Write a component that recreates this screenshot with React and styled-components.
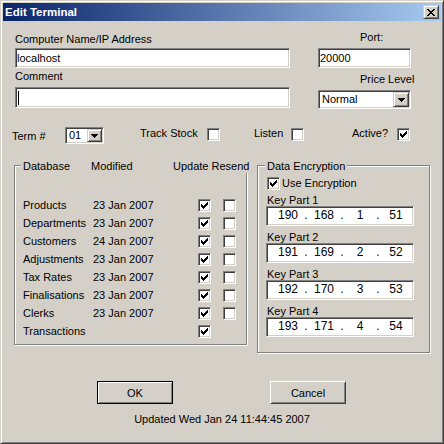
import React from 'react';
import styled, { createGlobalStyle } from 'styled-components';

const Global = createGlobalStyle`
  html, body { margin: 0; padding: 0; background: #D4D0C8; }
  body { font-family: "Liberation Sans", Arial, sans-serif; font-size: 11px; }
  * { box-sizing: border-box; }
`;

const FACE = '#D4D0C8';

const Window = styled.div`
  width: 444px;
  height: 444px;
  background: ${FACE};
  border: 1px solid;
  border-color: ${FACE} #404040 #404040 ${FACE};
  box-shadow: inset 1px 1px 0 #fff, inset -1px -1px 0 #808080;
  padding: 2px;
  display: flex;
  flex-direction: column;
  color: #000;
  font-family: "Liberation Sans", Arial, sans-serif;
  font-size: 11px;
  line-height: 13px;
`;

const TitleBar = styled.div`
  flex: none;
  height: 18px;
  display: flex;
  align-items: center;
  padding: 0 2px;
  background: linear-gradient(to right, #0A246A, #A6CAF0);
`;

const TitleText = styled.span`
  color: #fff;
  font-weight: bold;
  font-size: 11.5px;
  line-height: 13px;
`;

const raised = `
  border: 1px solid;
  border-color: ${FACE} #404040 #404040 ${FACE};
  box-shadow: inset 1px 1px 0 #fff, inset -1px -1px 0 #808080;
  background: ${FACE};
`;

const sunken = `
  border: 1px solid;
  border-color: #808080 #fff #fff #808080;
  box-shadow: inset 1px 1px 0 #404040, inset -1px -1px 0 ${FACE};
  background: #fff;
`;

const CaptionButton = styled.div`
  ${raised}
  width: 16px;
  height: 14px;
  margin-left: auto;
  display: flex;
  align-items: center;
  justify-content: center;
  padding-right: 1px;
`;

const Body = styled.div`
  flex: 1;
  display: flex;
  flex-direction: column;
`;

const TopFields = styled.div`
  display: flex;
  align-items: flex-start;
`;

const Column = styled.div`
  display: flex;
  flex-direction: column;
  width: ${p => p.$w}px;
  margin-left: ${p => p.$ml}px;
`;

const FieldLabel = styled.div`
  margin-top: ${p => p.$mt}px;
  padding-left: ${p => p.$indent || 0}px;
  white-space: nowrap;
`;

const TextBox = styled.div`
  ${sunken}
  margin-top: ${p => p.$mt}px;
  height: ${p => p.$h}px;
  padding: 0 1px;
  display: flex;
  align-items: center;
  line-height: ${p => p.$h - 2}px;
  white-space: nowrap;
`;

const Caret = styled.span`
  display: inline-block;
  width: 1px;
  height: 14px;
  background: #000;
  margin-left: 1px;
`;

const Combo = styled.div`
  ${sunken}
  width: ${p => p.$w}px;
  height: ${p => p.$h}px;
  margin-top: ${p => p.$mt || 0}px;
  padding: 1px;
  display: flex;
  flex: none;
`;

const ComboText = styled.div`
  flex: 1;
  padding-left: ${p => p.$pl}px;
  display: flex;
  align-items: center;
  white-space: nowrap;
`;

const ComboButton = styled.div`
  ${raised}
  width: ${p => p.$w}px;
  flex: none;
  display: flex;
  align-items: center;
  justify-content: center;
`;

const OptionsRow = styled.div`
  display: flex;
  align-items: flex-start;
  margin-top: 18px;
  margin-left: 9px;
  height: 17px;
`;

const OptLabel = styled.span`
  flex: none;
  width: ${p => p.$w}px;
  margin-left: ${p => p.$ml || 0}px;
  margin-top: ${p => p.$mt || 0}px;
  white-space: nowrap;
`;

const CheckBoxBox = styled.span`
  ${sunken}
  flex: none;
  width: 13px;
  height: 13px;
  display: inline-flex;
  align-items: center;
  justify-content: center;
  margin-top: ${p => p.$mt || 0}px;
  margin-left: ${p => p.$ml || 0}px;
`;

const Groups = styled.div`
  display: flex;
  align-items: flex-start;
  margin-top: 21px;
`;

const GroupBox = styled.div`
  position: relative;
  flex: none;
  width: ${p => p.$w}px;
  height: ${p => p.$h}px;
  margin-left: ${p => p.$ml}px;
  border: 1px solid #808080;
  box-shadow: 1px 1px 0 #fff, inset 1px 1px 0 #fff;
  padding: ${p => p.$pad};
  display: flex;
  flex-direction: column;
`;

const GroupCaption = styled.div`
  position: absolute;
  top: -6px;
  left: ${p => p.$left}px;
  right: ${p => (p.$right === undefined ? 'auto' : `${p.$right}px`)};
  height: 13px;
  padding: 0 2px;
  background: ${FACE};
  display: flex;
  white-space: nowrap;
`;

const CaptionCell = styled.span`
  flex: none;
  width: ${p => (p.$w ? `${p.$w}px` : 'auto')};
`;

const DbRow = styled.div`
  display: flex;
  align-items: flex-start;
  height: 18px;
  flex: none;
`;

const DbCell = styled.span`
  flex: none;
  width: ${p => p.$w}px;
  white-space: nowrap;
`;

const CheckRow = styled.label`
  display: flex;
  align-items: center;
  gap: 2px;
  margin-left: 1px;
`;

const KeyLabel = styled.div`
  line-height: 11px;
  margin-top: ${p => p.$mt}px;
  margin-left: 1px;
  white-space: nowrap;
`;

const IpBox = styled.div`
  ${sunken}
  width: 148px;
  height: 20px;
  padding-left: 6px;
  display: flex;
  font-size: 12px;
  line-height: 16px;
  flex: none;
`;

const IpPart = styled.span`
  width: 30px;
  text-align: center;
  flex: none;
`;

const IpDot = styled.span`
  width: 6px;
  text-align: center;
  flex: none;
`;

const ButtonRow = styled.div`
  display: flex;
  margin-top: 28px;
  margin-left: 94px;
  gap: 97px;
`;

const PushButton = styled.button`
  width: 76px;
  height: 23px;
  padding: 0;
  font-family: "Liberation Sans", Arial, sans-serif;
  font-size: 11px;
  color: #000;
  background: ${FACE};
  border: 1px solid;
  border-color: ${p => (p.$default ? '#000' : '#fff #404040 #404040 #fff')};
  box-shadow: ${p => (p.$default
    ? 'inset 1px 1px 0 #fff, inset -1px -1px 0 #808080'
    : `inset 1px 1px 0 ${FACE}, inset -1px -1px 0 #808080`)};
  cursor: default;
`;

const Status = styled.div`
  margin-top: 9px;
  text-align: center;
`;

const pixPath = rects => rects.map(([x, y, w]) => `M${x} ${y}h${w}v1h-${w}z`).join('');

const CHECK = pixPath([[6, 0, 1], [5, 1, 2], [0, 2, 1], [4, 2, 3], [0, 3, 2], [3, 3, 3], [0, 4, 5], [1, 5, 3], [2, 6, 1]]);
const CROSS = pixPath([[0, 0, 2], [6, 0, 2], [1, 1, 2], [5, 1, 2], [2, 2, 4], [3, 3, 2], [2, 4, 4], [1, 5, 2], [5, 5, 2], [0, 6, 2], [6, 6, 2]]);
const ARROW = pixPath([[0, 0, 7], [1, 1, 5], [2, 2, 3], [3, 3, 1]]);

const PixIcon = ({ d, w, h }) => (
  <svg width={w} height={h} viewBox={`0 0 ${w} ${h}`} shapeRendering="crispEdges" style={{ display: 'block' }}>
    <path d={d} fill="#000" />
  </svg>
);

const CheckBox = ({ checked, mt, ml }) => (
  <CheckBoxBox $mt={mt} $ml={ml}>
    {checked && <PixIcon d={CHECK} w={7} h={7} />}
  </CheckBoxBox>
);

const DropDown = ({ value, w, h, mt, pl, bw }) => (
  <Combo $w={w} $h={h} $mt={mt}>
    <ComboText $pl={pl}>{value}</ComboText>
    <ComboButton $w={bw}>
      <PixIcon d={ARROW} w={7} h={4} />
    </ComboButton>
  </Combo>
);

const databases = [
  { name: 'Products', date: '23 Jan 2007', resend: true },
  { name: 'Departments', date: '23 Jan 2007', resend: true },
  { name: 'Customers', date: '24 Jan 2007', resend: true },
  { name: 'Adjustments', date: '23 Jan 2007', resend: true },
  { name: 'Tax Rates', date: '23 Jan 2007', resend: true },
  { name: 'Finalisations', date: '23 Jan 2007', resend: true },
  { name: 'Clerks', date: '23 Jan 2007', resend: true },
  { name: 'Transactions', date: '', resend: false },
];

const keys = [
  ['190', '168', '1', '51'],
  ['191', '169', '2', '52'],
  ['192', '170', '3', '53'],
  ['193', '171', '4', '54'],
];

export default function App() {
  return (
    <>
      <Global />
      <Window>
        <TitleBar>
          <TitleText>Edit Terminal</TitleText>
          <CaptionButton>
            <PixIcon d={CROSS} w={8} h={7} />
          </CaptionButton>
        </TitleBar>
        <Body>
          <TopFields>
            <Column $w={275} $ml={12}>
              <FieldLabel $mt={12}>Computer Name/IP Address</FieldLabel>
              <TextBox $mt={2} $h={20}>localhost</TextBox>
              <FieldLabel $mt={2}>Comment</FieldLabel>
              <TextBox $mt={4} $h={21}><Caret /></TextBox>
            </Column>
            <Column $w={93} $ml={28}>
              <FieldLabel $mt={10} $indent={42}>Port:</FieldLabel>
              <TextBox $mt={4} $h={20}>20000</TextBox>
              <FieldLabel $mt={5} $indent={42}>Price Level</FieldLabel>
              <DropDown value="Normal" w={93} h={19} mt={4} pl={2} bw={16} />
            </Column>
          </TopFields>

          <OptionsRow>
            <OptLabel $w={53} $mt={3}>Term #</OptLabel>
            <DropDown value="01" w={39} h={17} pl={2} bw={15} />
            <OptLabel $w={67} $ml={36}>Track Stock</OptLabel>
            <CheckBox mt={1} />
            <OptLabel $w={37} $ml={34}>Listen</OptLabel>
            <CheckBox mt={1} />
            <OptLabel $w={45} $ml={48}>Active?</OptLabel>
            <CheckBox mt={1} checked />
          </OptionsRow>

          <Groups>
            <GroupBox $w={233} $h={180} $ml={11} $pad="33px 0 0 8px">
              <GroupCaption $left={6} $right={-3}>
                <CaptionCell $w={68}>Database</CaptionCell>
                <CaptionCell $w={82}>Modified</CaptionCell>
                <CaptionCell>Update Resend</CaptionCell>
              </GroupCaption>
              {databases.map(db => (
                <DbRow key={db.name}>
                  <DbCell $w={70}>{db.name}</DbCell>
                  <DbCell $w={105}>{db.date}</DbCell>
                  <CheckBox checked />
                  {db.resend && <CheckBox ml={12} />}
                </DbRow>
              ))}
            </GroupBox>

            <GroupBox $w={173} $h={188} $ml={10} $pad="11px 0 0 8px">
              <GroupCaption $left={7}>Data Encryption</GroupCaption>
              <CheckRow>
                <CheckBox checked />
                <span>Use Encryption</span>
              </CheckRow>
              {keys.map((k, i) => (
                <React.Fragment key={i}>
                  <KeyLabel $mt={i === 0 ? 5 : 6}>Key Part {i + 1}</KeyLabel>
                  <IpBox>
                    <IpPart>{k[0]}</IpPart>
                    <IpDot>.</IpDot>
                    <IpPart>{k[1]}</IpPart>
                    <IpDot>.</IpDot>
                    <IpPart>{k[2]}</IpPart>
                    <IpDot>.</IpDot>
                    <IpPart>{k[3]}</IpPart>
                  </IpBox>
                </React.Fragment>
              ))}
            </GroupBox>
          </Groups>

          <ButtonRow>
            <PushButton $default>OK</PushButton>
            <PushButton>Cancel</PushButton>
          </ButtonRow>

          <Status>Updated Wed Jan 24 11:44:45 2007</Status>
        </Body>
      </Window>
    </>
  );
}
